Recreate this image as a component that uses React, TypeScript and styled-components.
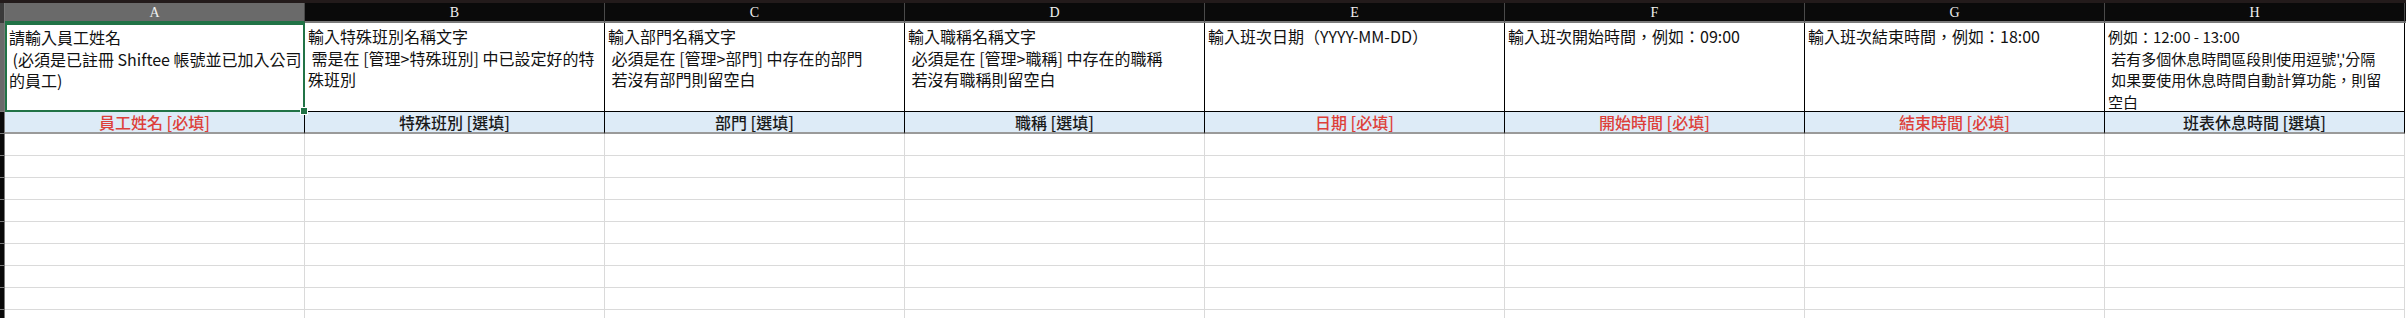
import React from 'react'
import styled, { createGlobalStyle } from 'styled-components'

const GlobalStyle = createGlobalStyle`
  html, body {
    margin: 0;
    padding: 0;
    background: #ffffff;
    overflow: hidden;
  }
  body {
    font-family: "Noto Sans CJK TC", "Noto Sans", sans-serif;
  }
`

type Column = {
  letter: string
  note: string
  title: string
  required: boolean
  tight?: boolean
}

const columns: Column[] = [
  {
    letter: 'A',
    note: '請輸入員工姓名\n (必須是已註冊 Shiftee 帳號並已加入公司\n的員工)',
    title: '員工姓名 [必填]',
    required: true,
  },
  {
    letter: 'B',
    note: '輸入特殊班別名稱文字\n 需是在 [管理>特殊班別] 中已設定好的特\n殊班別',
    title: '特殊班別 [選填]',
    required: false,
  },
  {
    letter: 'C',
    note: '輸入部門名稱文字\n 必須是在 [管理>部門] 中存在的部門\n 若沒有部門則留空白',
    title: '部門 [選填]',
    required: false,
  },
  {
    letter: 'D',
    note: '輸入職稱名稱文字\n 必須是在 [管理>職稱] 中存在的職稱\n 若沒有職稱則留空白',
    title: '職稱 [選填]',
    required: false,
  },
  {
    letter: 'E',
    note: '輸入班次日期（YYYY-MM-DD）',
    title: '日期 [必填]',
    required: true,
  },
  {
    letter: 'F',
    note: '輸入班次開始時間，例如：09:00',
    title: '開始時間 [必填]',
    required: true,
  },
  {
    letter: 'G',
    note: '輸入班次結束時間，例如：18:00',
    title: '結束時間 [必填]',
    required: true,
  },
  {
    letter: 'H',
    note: "例如：12:00 - 13:00\n 若有多個休息時間區段則使用逗號','分隔\n 如果要使用休息時間自動計算功能，則留\n空白",
    title: '班表休息時間 [選填]',
    required: false,
    tight: true,
  },
]

const EMPTY_ROWS = 9

const Sheet = styled.div`
  display: grid;
  grid-template-columns: 5px repeat(8, 300px) 1fr;
  grid-template-rows: 3px 20px 89px 22px repeat(${EMPTY_ROWS}, 22px);
  width: 2406px;
  height: 318px;
  overflow: hidden;
`

const TopBand = styled.div`
  grid-column: 1 / -1;
  background: #231b1b;
`

const Corner = styled.div`
  background: #3a3a3a;
  border-right: 1px solid #777;
  box-sizing: border-box;
`

const ColHeader = styled.div<{ $active?: boolean }>`
  display: flex;
  align-items: center;
  justify-content: center;
  box-sizing: border-box;
  background: ${(p) => (p.$active ? '#6a6a6a' : '#0a0a0a')};
  border-right: 1px solid #4a4a4a;
  border-bottom: 2px solid ${(p) => (p.$active ? '#217346' : '#7a7a7a')};
  color: #f0f0f0;
  font-family: "Liberation Serif", "DejaVu Serif", serif;
  font-size: 14px;
  line-height: 1;
  padding-top: 2px;
`

const HeaderFiller = styled.div`
  background: #0a0a0a;
  border-bottom: 2px solid #7a7a7a;
  box-sizing: border-box;
`

const RowHeader = styled.div<{ $active?: boolean }>`
  background: ${(p) => (p.$active ? '#6a6a6a' : '#0a0a0a')};
  border-right: 1px solid #7a7a7a;
  border-bottom: 1px solid #7a7a7a;
  box-sizing: border-box;
`

const NoteCell = styled.div<{ $selected?: boolean; $tight?: boolean }>`
  position: relative;
  box-sizing: border-box;
  background: #ffffff;
  border-right: 1px solid #000;
  border-bottom: 1px solid #000;
  padding: 3px 3px 0 3px;
  font-size: ${(p) => (p.$tight ? '15px' : '16px')};
  line-height: 21.5px;
  color: #111;
  white-space: pre;
  overflow: hidden;
  ${(p) =>
    p.$selected &&
    `
    border: 2px solid #217346;
    padding: 2px 2px 0 2px;
    overflow: visible;
    z-index: 2;
  `}
`

const Handle = styled.span`
  position: absolute;
  right: -5px;
  bottom: -5px;
  width: 6px;
  height: 6px;
  background: #217346;
  border: 1px solid #ffffff;
`

const TitleCell = styled.div<{ $required: boolean }>`
  display: flex;
  align-items: center;
  justify-content: center;
  box-sizing: border-box;
  background: #ddebf7;
  border-right: 1px solid #000;
  border-bottom: 2px solid #9a9a9a;
  font-size: 16px;
  font-weight: 500;
  color: ${(p) => (p.$required ? '#dd3f3a' : '#1a1a1a')};
`

const EmptyCell = styled.div`
  box-sizing: border-box;
  border-right: 1px solid #dadada;
  border-bottom: 1px solid #dadada;
`

const Filler = styled.div<{ $dark?: boolean }>`
  background: ${(p) => (p.$dark ? '#0a0a0a' : '#ffffff')};
`

export default function App() {
  return (
    <>
      <GlobalStyle />
      <Sheet>
        <TopBand />

        <Corner />
        {columns.map((c) => (
          <ColHeader key={c.letter} $active={c.letter === 'A'}>
            {c.letter}
          </ColHeader>
        ))}
        <HeaderFiller />

        <RowHeader $active />
        {columns.map((c) => (
          <NoteCell key={c.letter} $selected={c.letter === 'A'} $tight={c.tight}>
            {c.note}
            {c.letter === 'A' && <Handle />}
          </NoteCell>
        ))}
        <Filler />

        <RowHeader />
        {columns.map((c) => (
          <TitleCell key={c.letter} $required={c.required}>
            {c.title}
          </TitleCell>
        ))}
        <Filler />

        {Array.from({ length: EMPTY_ROWS }).map((_, r) => (
          <React.Fragment key={r}>
            <RowHeader />
            {columns.map((c) => (
              <EmptyCell key={c.letter} />
            ))}
            <Filler />
          </React.Fragment>
        ))}
      </Sheet>
    </>
  )
}
